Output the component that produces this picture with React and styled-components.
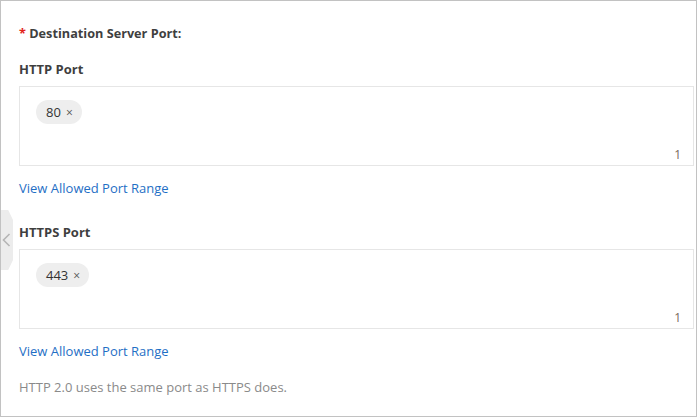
import React from "react";
import styled, { createGlobalStyle } from "styled-components";

const GlobalStyle = createGlobalStyle`
  html, body {
    margin: 0;
    padding: 0;
    background: #ffffff;
  }
  body {
    font-family: "Open Sans", "Noto Sans", Arial, sans-serif;
  }
`;

const fields = [
  { title: "HTTP Port", ports: ["80"] },
  { title: "HTTPS Port", ports: ["443"] },
];

function App() {
  return (
    <>
      <GlobalStyle />
      <Frame>
        <CollapseTab aria-label="Collapse">
          <svg width="9" height="14" viewBox="0 0 9 14" fill="none">
            <path d="M7.5 1L1.5 7l6 6" stroke="#b5b5b5" strokeWidth="1.6" />
          </svg>
        </CollapseTab>
        <Required>
          <Star>*</Star> Destination Server Port:
        </Required>
        {fields.map((f, i) => (
          <Field key={f.title} first={i === 0}>
            <FieldTitle>{f.title}</FieldTitle>
            <TagBox>
              <TagRow>
                {f.ports.map((p) => (
                  <Tag key={p}>
                    {p}
                    <Close>×</Close>
                  </Tag>
                ))}
              </TagRow>
              <Counter>{f.ports.length}</Counter>
            </TagBox>
            <Link href="#">View Allowed Port Range</Link>
          </Field>
        ))}
        <Hint>HTTP 2.0 uses the same port as HTTPS does.</Hint>
      </Frame>
    </>
  );
}

export default App;

const Frame = styled.div`
  position: relative;
  box-sizing: border-box;
  width: 697px;
  height: 417px;
  border: 1px solid #c2c2c2;
  padding: 23px 2px 0 18px;
  overflow: hidden;
`;

const CollapseTab = styled.div`
  position: absolute;
  left: 0;
  top: 209px;
  width: 12px;
  height: 60px;
  background: #ececec;
  clip-path: polygon(0 0, 60% 0, 100% 10px, 100% 50px, 60% 100%, 0 100%);
  display: flex;
  align-items: center;
  justify-content: flex-start;
  padding-left: 1px;
  box-sizing: border-box;
`;

const Required = styled.div`
  font-size: 12.7px;
  line-height: 18px;
  font-weight: 700;
  color: #3f3f3f;
`;

const Star = styled.span`
  color: #e2231a;
`;

const Field = styled.div`
  margin-top: ${({ first }) => (first ? "18px" : "26px")};
`;

const FieldTitle = styled.div`
  font-size: 13px;
  line-height: 18px;
  font-weight: 700;
  color: #3f3f3f;
  margin-bottom: 8px;
`;

const TagBox = styled.div`
  position: relative;
  box-sizing: border-box;
  height: 80px;
  border: 1px solid #e6e6e6;
  padding: 13px 16px;
`;

const TagRow = styled.div`
  display: flex;
  flex-wrap: wrap;
  gap: 6px;
`;

const Tag = styled.span`
  display: inline-flex;
  align-items: center;
  height: 24px;
  padding: 0 9px 0 10px;
  border-radius: 12px;
  background: #eeeeee;
  font-size: 13px;
  color: #333333;
`;

const Close = styled.span`
  margin-left: 5px;
  font-size: 12px;
  color: #555555;
`;

const Counter = styled.span`
  position: absolute;
  right: 12px;
  bottom: 2px;
  font-size: 12px;
  line-height: 16px;
  color: #7a6a5a;
`;

const Link = styled.a`
  display: block;
  margin-top: 13px;
  font-size: 13px;
  line-height: 18px;
  color: #1f6fc5;
  text-decoration: none;
`;

const Hint = styled.div`
  margin-top: 18px;
  font-size: 13px;
  line-height: 18px;
  color: #8a8a8a;
`;
